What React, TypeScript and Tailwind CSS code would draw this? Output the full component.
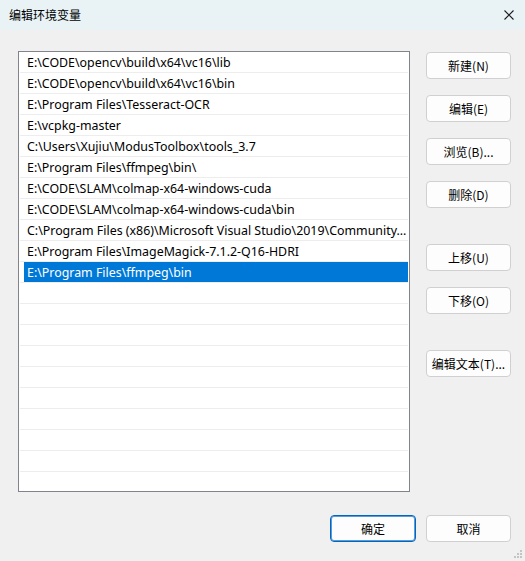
import React from "react";

const rows = [
  "E:\\CODE\\opencv\\build\\x64\\vc16\\lib",
  "E:\\CODE\\opencv\\build\\x64\\vc16\\bin",
  "E:\\Program Files\\Tesseract-OCR",
  "E:\\vcpkg-master",
  "C:\\Users\\Xujiu\\ModusToolbox\\tools_3.7",
  "E:\\Program Files\\ffmpeg\\bin\\",
  "E:\\CODE\\SLAM\\colmap-x64-windows-cuda",
  "E:\\CODE\\SLAM\\colmap-x64-windows-cuda\\bin",
  "C:\\Program Files (x86)\\Microsoft Visual Studio\\2019\\Community...",
  "E:\\Program Files\\ImageMagick-7.1.2-Q16-HDRI",
  "E:\\Program Files\\ffmpeg\\bin",
];

const SELECTED = 10;
const TOTAL = 21;

function Btn({ label, className = "" }: { label: string; className?: string }) {
  return (
    <div
      className={
        "w-[85px] h-[27px] flex items-center justify-center rounded-[4px] border border-[#d0d0d0] bg-[#fdfdfd] text-[12px] text-black " +
        className
      }
    >
      {label}
    </div>
  );
}

export default function App() {
  const all = Array.from({ length: TOTAL }, (_, i) => rows[i] ?? "");
  return (
    <div
      className="w-[525px] h-[561px] bg-[#f0f0f0] flex flex-col overflow-hidden"
      style={{ fontFamily: '"Noto Sans", "Noto Sans CJK SC", sans-serif' }}
    >
      {/* Title bar */}
      <div className="h-[30px] bg-[#e9f3f6] flex items-center justify-between pl-[9px] pr-[10px] shrink-0">
        <span
          className="text-[12px] text-black leading-[16px]"
          style={{ fontFamily: '"Noto Sans CJK SC", sans-serif' }}
        >
          编辑环境变量
        </span>
        <svg width="10" height="10" viewBox="0 0 10 10" className="mr-[1px]">
          <path d="M0.5 0.5 L9.5 9.5 M9.5 0.5 L0.5 9.5" stroke="#1a1a1a" strokeWidth="1.1" />
        </svg>
      </div>

      {/* Main */}
      <div className="flex pl-[18px] pt-[21px]">
        <div className="w-[392px] h-[441px] border border-[#82848c] bg-white px-[1px] overflow-hidden">
          {all.map((t, i) => (
            <div key={i} className="h-[21px] border-b border-[#ededed] flex">
              {i === SELECTED ? (
                <div className="ml-[4px] flex-1 bg-[#0078d7] text-white text-[12.4px] flex items-center pl-[3px] pt-[2px] leading-[16px] whitespace-nowrap">
                  {t}
                </div>
              ) : (
                <div className="flex-1 min-w-0 text-[12.4px] text-black flex items-center pl-[7px] pt-[2px] leading-[16px] whitespace-nowrap">
                  {t}
                </div>
              )}
            </div>
          ))}
        </div>

        <div
          className="ml-[16px] pt-[1px] flex flex-col gap-[16px]"
          style={{ fontFamily: '"Noto Sans CJK SC", sans-serif' }}
        >
          <Btn label="新建(N)" />
          <Btn label="编辑(E)" />
          <Btn label="浏览(B)..." />
          <Btn label="删除(D)" />
          <Btn label="上移(U)" className="mt-[20px]" />
          <Btn label="下移(O)" />
          <Btn label="编辑文本(T)..." className="mt-[20px]" />
        </div>
      </div>

      {/* Bottom buttons */}
      <div
        className="flex justify-end gap-[10px] pr-[14px] mt-[23px]"
        style={{ fontFamily: '"Noto Sans CJK SC", sans-serif' }}
      >
        <div className="w-[86px] h-[27px] flex items-center justify-center rounded-[4px] border border-[#0067c0] shadow-[inset_0_0_0_1px_#5a9bd8] bg-[#fdfdfd] text-[12px] text-black">
          确定
        </div>
        <div className="w-[85px] h-[27px] flex items-center justify-center rounded-[4px] border border-[#d0d0d0] bg-[#fdfdfd] text-[12px] text-black">
          取消
        </div>
      </div>

      {/* Resize grip */}
      <div className="relative flex-1">
        <svg width="10" height="10" viewBox="0 0 10 10" className="absolute right-[2px] bottom-[2px]">
          <rect x="7" y="1" width="2" height="2" fill="#c4c4c4" />
          <rect x="4" y="4" width="2" height="2" fill="#c4c4c4" />
          <rect x="7" y="4" width="2" height="2" fill="#c4c4c4" />
          <rect x="1" y="7" width="2" height="2" fill="#c4c4c4" />
          <rect x="4" y="7" width="2" height="2" fill="#c4c4c4" />
          <rect x="7" y="7" width="2" height="2" fill="#c4c4c4" />
        </svg>
      </div>
    </div>
  );
}
